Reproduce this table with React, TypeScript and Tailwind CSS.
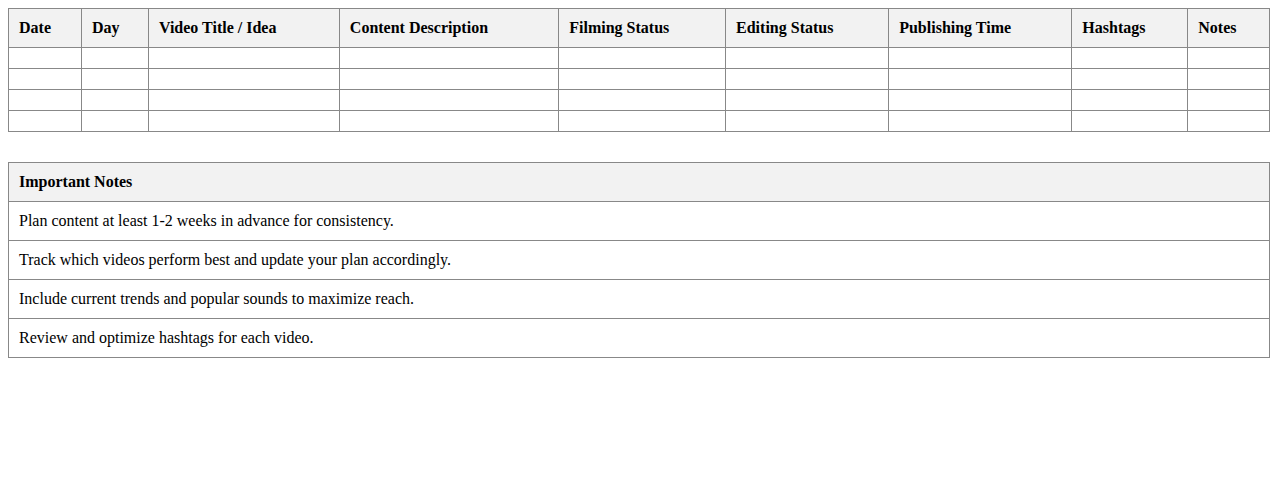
const columns = [
  'Date',
  'Day',
  'Video Title / Idea',
  'Content Description',
  'Filming Status',
  'Editing Status',
  'Publishing Time',
  'Hashtags',
  'Notes',
];

const notes = [
  'Plan content at least 1-2 weeks in advance for consistency.',
  'Track which videos perform best and update your plan accordingly.',
  'Include current trends and popular sounds to maximize reach.',
  'Review and optimize hashtags for each video.',
];

export default function App() {
  return (
    <div className="min-h-screen bg-white p-2 text-base text-black font-['Liberation_Serif','Times_New_Roman',serif]">
      {/* Content calendar */}
      <table className="w-full border-collapse">
        <thead>
          <tr>
            {columns.map((col) => (
              <th
                key={col}
                className="border border-[#888] bg-[#f2f2f2] p-[10px] text-left font-bold leading-[18px]"
              >
                {col}
              </th>
            ))}
          </tr>
        </thead>
        <tbody>
          {[0, 1, 2, 3].map((row) => (
            <tr key={row}>
              {columns.map((col) => (
                <td key={col} className="border border-[#888] p-[10px]"></td>
              ))}
            </tr>
          ))}
        </tbody>
      </table>

      {/* Notes */}
      <table className="mt-[30px] w-full border-collapse">
        <thead>
          <tr>
            <th className="border border-[#888] bg-[#f2f2f2] p-[10px] text-left font-bold leading-[18px]">
              Important Notes
            </th>
          </tr>
        </thead>
        <tbody>
          {notes.map((note) => (
            <tr key={note}>
              <td className="border border-[#888] p-[10px] leading-[18px]">{note}</td>
            </tr>
          ))}
        </tbody>
      </table>
    </div>
  );
}
